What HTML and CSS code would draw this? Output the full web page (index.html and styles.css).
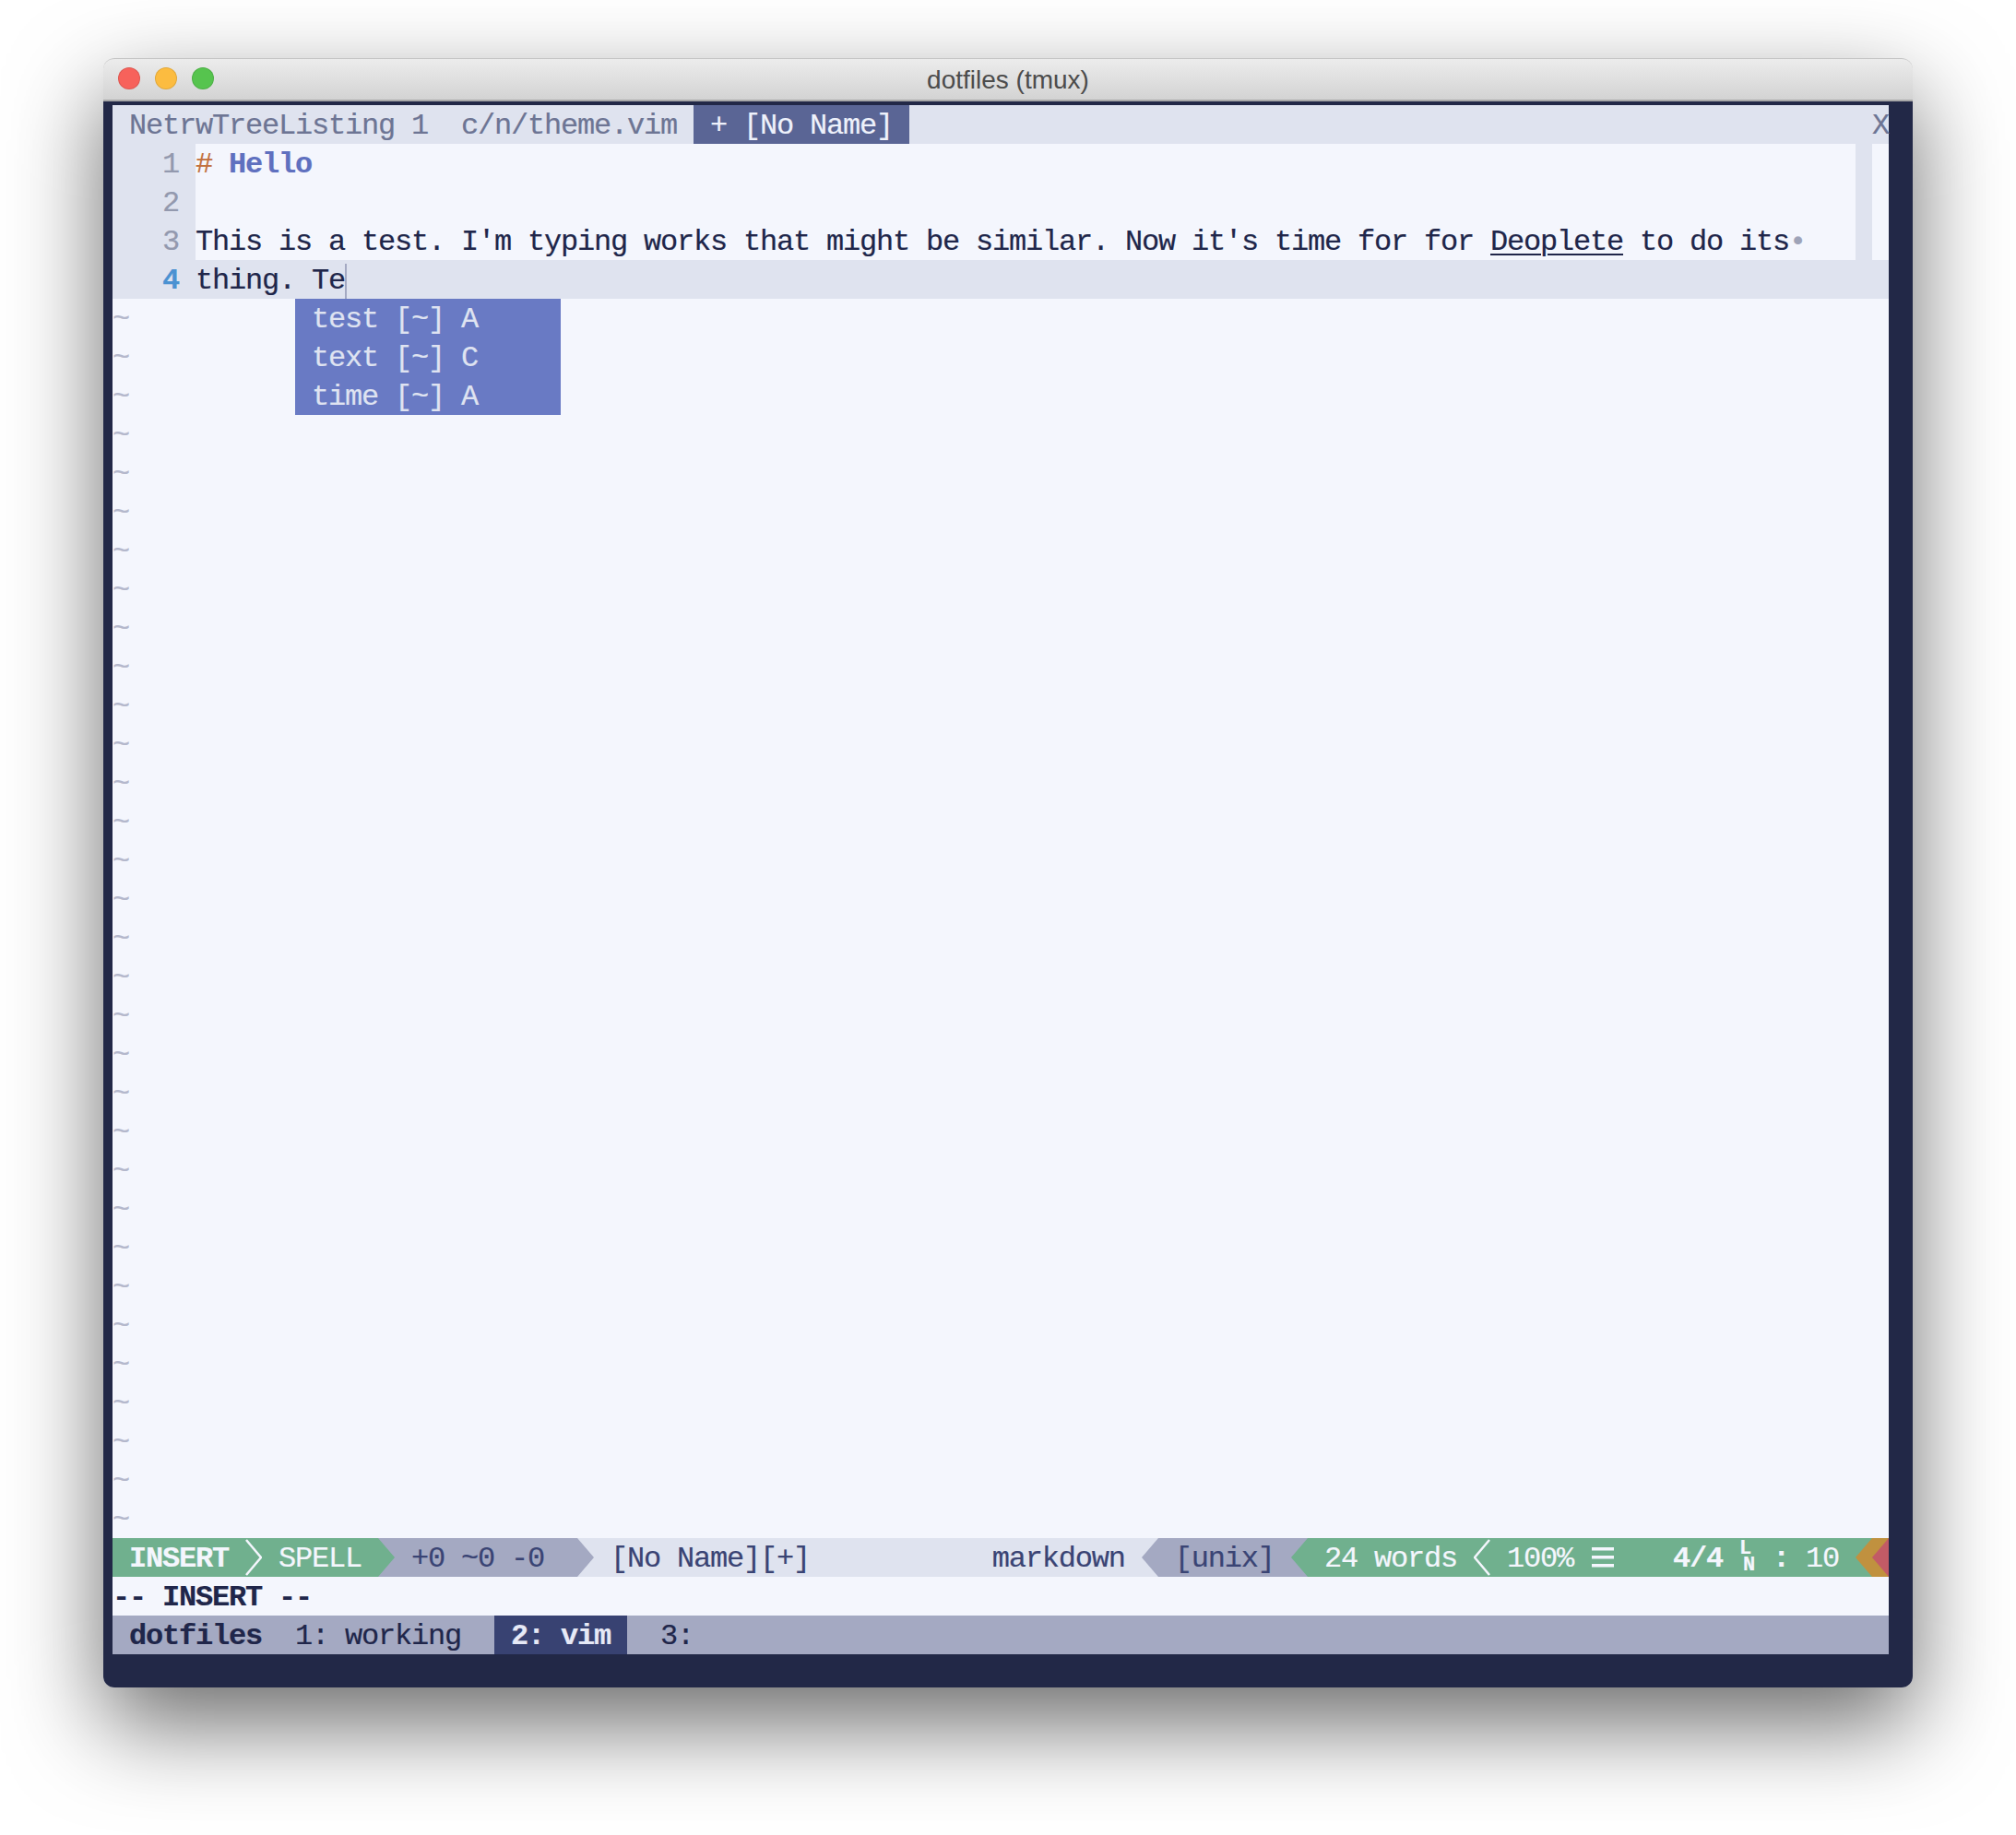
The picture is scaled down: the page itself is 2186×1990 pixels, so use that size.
FILE: index.html
```html
<!DOCTYPE html>
<html lang="en">
<head>
<meta charset="utf-8">
<title>dotfiles (tmux)</title>
<link rel="stylesheet" href="styles.css">
</head>
<body>
<main class="window">
  <header class="titlebar">
    <div class="lights"><i class="light red"></i><i class="light yellow"></i><i class="light green"></i></div>
    <div class="title">dotfiles (tmux)</div>
  </header>
  <div class="term">
    <div class="screen">
      <div class="row tabline"><span class="tab"> NetrwTreeListing 1  c/n/theme.vim </span><span class="tab-on"> + [No Name] </span><span class="fill"></span><span class="tab">X</span></div>
      <div class="line"><span class="num">1</span><span class="code"><span class="hash">#</span> <b class="head">Hello</b></span><span class="sign"></span><span class="tail"></span></div>
      <div class="line"><span class="num">2</span><span class="code"></span><span class="sign"></span><span class="tail"></span></div>
      <div class="line"><span class="num">3</span><span class="code">This is a test. I'm typing works that might be similar. Now it's time for for <u class="spell">Deoplete</u> to do its<span class="wrapdot">•</span></span><span class="sign"></span><span class="tail"></span></div>
      <div class="line current"><b class="num">4</b><span class="code">thing. Te<span class="cursor"></span></span></div>
      <div class="buffer">
        <div class="popup">
          <div class="row"> test [~] A</div>
          <div class="row"> text [~] C</div>
          <div class="row"> time [~] A</div>
        </div>
        <div class="row tilde">~</div><div class="row tilde">~</div><div class="row tilde">~</div><div class="row tilde">~</div>
        <div class="row tilde">~</div><div class="row tilde">~</div><div class="row tilde">~</div><div class="row tilde">~</div>
        <div class="row tilde">~</div><div class="row tilde">~</div><div class="row tilde">~</div><div class="row tilde">~</div>
        <div class="row tilde">~</div><div class="row tilde">~</div><div class="row tilde">~</div><div class="row tilde">~</div>
        <div class="row tilde">~</div><div class="row tilde">~</div><div class="row tilde">~</div><div class="row tilde">~</div>
        <div class="row tilde">~</div><div class="row tilde">~</div><div class="row tilde">~</div><div class="row tilde">~</div>
        <div class="row tilde">~</div><div class="row tilde">~</div><div class="row tilde">~</div><div class="row tilde">~</div>
        <div class="row tilde">~</div><div class="row tilde">~</div><div class="row tilde">~</div><div class="row tilde">~</div>
      </div>
      <div class="row status">
        <span class="seg-green"><b> INSERT </b><svg class="cell" viewBox="0 0 18 42"><path class="thin" d="M1 2 L17 21 L1 40"/></svg> SPELL </span>
        <svg class="cell on-gray" viewBox="0 0 18 42"><path class="f-green" d="M0 0 L18 21 L0 42Z"/></svg>
        <span class="seg-gray"> +0 ~0 -0  </span>
        <svg class="cell on-light" viewBox="0 0 18 42"><path class="f-gray" d="M0 0 L18 21 L0 42Z"/></svg>
        <span class="seg-light"> [No Name][+]</span>
        <span class="fill"></span>
        <span class="seg-light">markdown </span>
        <svg class="cell on-light" viewBox="0 0 18 42"><path class="f-gray" d="M18 0 L0 21 L18 42Z"/></svg>
        <span class="seg-gray"> [unix] </span>
        <svg class="cell on-gray" viewBox="0 0 18 42"><path class="f-green" d="M18 0 L0 21 L18 42Z"/></svg>
        <span class="seg-green"> 24 words <svg class="cell" viewBox="0 0 18 42"><path class="thin" d="M17 2 L1 21 L17 40"/></svg> 100% <svg class="menu" viewBox="0 0 36 42"><path class="bars" d="M2 10h24v3.500h-24zM2 19h24v3.500h-24zM2 28h24v3.500h-24z"/></svg>   <b>4/4</b> <b class="ln"><span>L</span><span class="ln-n">N</span></b> <b>:</b> 10 </span>
        <svg class="cell on-green" viewBox="0 0 18 42"><path class="f-orange" d="M18 0 L0 21 L18 42Z"/></svg>
        <svg class="cell on-orange" viewBox="0 0 18 42"><path class="f-red" d="M18 0 L0 21 L18 42Z"/></svg>
      </div>
      <div class="row cmd"><b>-- INSERT --</b></div>
      <div class="row tmux"><b> dotfiles</b>  1: working  <b class="win-on"> 2: vim </b>  3:</div>
    </div>
  </div>
</main>
</body>
</html>
```

FILE: styles.css
```css
* { box-sizing: border-box; }
html, body { margin: 0; background: #fff; }
body { padding: 63px 112px 160px; }

.window {
  width: 1962px;
  height: 1767px;
  display: flex;
  flex-direction: column;
  border-radius: 12px;
  box-shadow: 0 40px 100px rgba(0, 0, 0, .58);
}

.titlebar {
  height: 47px;
  flex: none;
  display: flex;
  align-items: center;
  position: relative;
  padding: 0 16px 2px;
  border-radius: 12px 12px 0 0;
  border-top: 1px solid #c4c4c4;
  border-bottom: 2px solid #a9a9a9;
  background: linear-gradient(#ececec, #d3d3d3);
}
.lights { display: flex; gap: 16px; }
.light { width: 24px; height: 24px; border-radius: 50%; display: block; border: 1px solid rgba(0, 0, 0, .1); }
.red { background: #f7625b; }
.yellow { background: #fcbc40; }
.green { background: #56c44e; }
.title {
  position: absolute;
  inset: 0 0 2px;
  text-align: center;
  font: 28px/46px "Liberation Sans", sans-serif;
  color: #4c4c4c;
}

.term {
  flex: 1;
  background: #222847;
  padding: 4px 26px 36px 10px;
  border-radius: 0 0 12px 12px;
}
.screen {
  background: #f4f6fd;
  color: #20264a;
  font: 32px/46px "Liberation Mono", monospace;
  letter-spacing: -1.203px;
  -webkit-text-stroke: .2px currentColor;
}

.row, .line { height: 42px; white-space: pre; }
.fill { flex: 1; }

.tabline { display: flex; background: #dfe3ef; color: #6d7594; }
.tab-on { background: #5a6595; color: #eef1fb; }

.line { display: flex; background: #dfe3ef; }
.num { width: 90px; padding-right: 18px; text-align: right; color: #9399ae; font-weight: 400; }
.code { flex: 1; background: #f4f6fd; }
.sign { width: 18px; }
.tail { width: 18px; background: #f4f6fd; }
.current .code { background: transparent; position: relative; }
.current .num { color: #4b92d2; font-weight: 700; }
.hash { color: #c2703d; }
.head { color: #5f70bf; }
.spell { text-decoration-thickness: 2px; text-underline-offset: 4px; }
.wrapdot { color: #9ea3b8; }
.cursor { position: absolute; top: 4px; width: 2px; height: 38px; background: #a4a9c2; }

.buffer { position: relative; }
.tilde { color: #b4b8cc; }
.popup {
  position: absolute;
  left: 198px;
  top: 0;
  width: 288px;
  background: #697ac4;
  color: #dfe3f1;
}

.status { display: flex; background: #dfe3ef; color: #3a4474; }
.status > svg { display: block; flex: none; }
.cell { width: 18px; height: 42px; display: inline-block; vertical-align: top; }
.menu { width: 36px; height: 42px; display: inline-block; vertical-align: top; }
.seg-green { background: #70b08e; color: #f4f6fd; }
.seg-gray { background: #a4a9c2; }
.seg-light { background: #dfe3ef; }
.thin { fill: none; stroke: #f4f6fd; stroke-width: 2.5px; }
.bars { fill: #f4f6fd; stroke: none; }
.f-green { fill: #70b08e; }
.f-gray { fill: #a4a9c2; }
.f-orange { fill: #c0913f; }
.f-red { fill: #c25b66; }
.on-gray { background: #a4a9c2; }
.on-light { background: #dfe3ef; }
.on-green { background: #70b08e; }
.on-orange { background: #c0913f; }
.ln {
  width: 18px;
  height: 42px;
  display: inline-flex;
  flex-direction: column;
  align-items: flex-start;
  vertical-align: top;
  font-size: 22px;
  line-height: 18px;
  letter-spacing: 0;
  padding-top: 3px;
}
.ln-n { margin-left: 4px; }

.cmd { color: #20264a; }
.tmux { background: #a4a9c2; color: #20264a; }
.win-on { background: #384272; color: #e6e9f6; display: inline-block; height: 42px; }
```
